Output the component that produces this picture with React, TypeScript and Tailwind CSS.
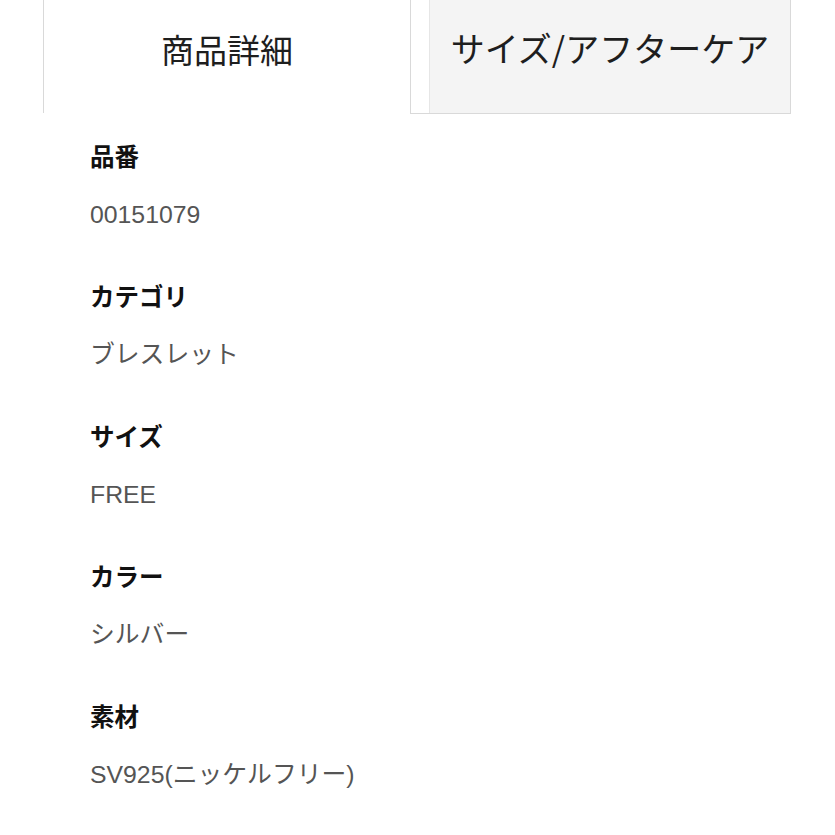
import React from "react";

const items = [
  { label: "品番", value: "00151079" },
  { label: "カテゴリ", value: "ブレスレット" },
  { label: "サイズ", value: "FREE" },
  { label: "カラー", value: "シルバー" },
  { label: "素材", value: "SV925(ニッケルフリー)" },
];

export default function App() {
  return (
    <div
      className="w-[835px] h-[835px] bg-white overflow-hidden"
      style={{ fontFamily: '"Liberation Sans", "Noto Sans CJK JP", sans-serif' }}
    >
      <div className="flex h-[114px] pl-[43px]">
        <div className="w-[367px] h-[113px] border-l border-[#d9d9d9] bg-white flex items-center justify-center pb-[14px]">
          <span className="text-[33px] text-[#1e1e1e]" style={{ fontFamily: '"Noto Sans CJK JP", sans-serif' }}>
            商品詳細
          </span>
        </div>
        <div className="w-[381px] h-[114px] border border-t-0 border-[#d9d9d9] flex">
          <div className="w-[19px] bg-white border-r border-[#e6e6e6]" />
          <div className="flex-1 bg-[#f4f4f4] flex items-center justify-center pb-[18px]">
            <span className="text-[34px] text-[#1e1e1e] whitespace-nowrap" style={{ fontFamily: '"Noto Sans CJK JP", sans-serif' }}>
              サイズ/アフターケア
            </span>
          </div>
        </div>
      </div>
      <div className="pl-[90px] pt-[24px] flex flex-col">
        {items.map((it) => (
          <div key={it.label} className="h-[140px] flex flex-col">
            <div className="h-[40px] leading-[40px] text-[24.5px] font-bold text-[#111]">{it.label}</div>
            <div className="mt-[17px] h-[40px] leading-[40px] text-[24.8px] text-[#555]">{it.value}</div>
          </div>
        ))}
      </div>
    </div>
  );
}
